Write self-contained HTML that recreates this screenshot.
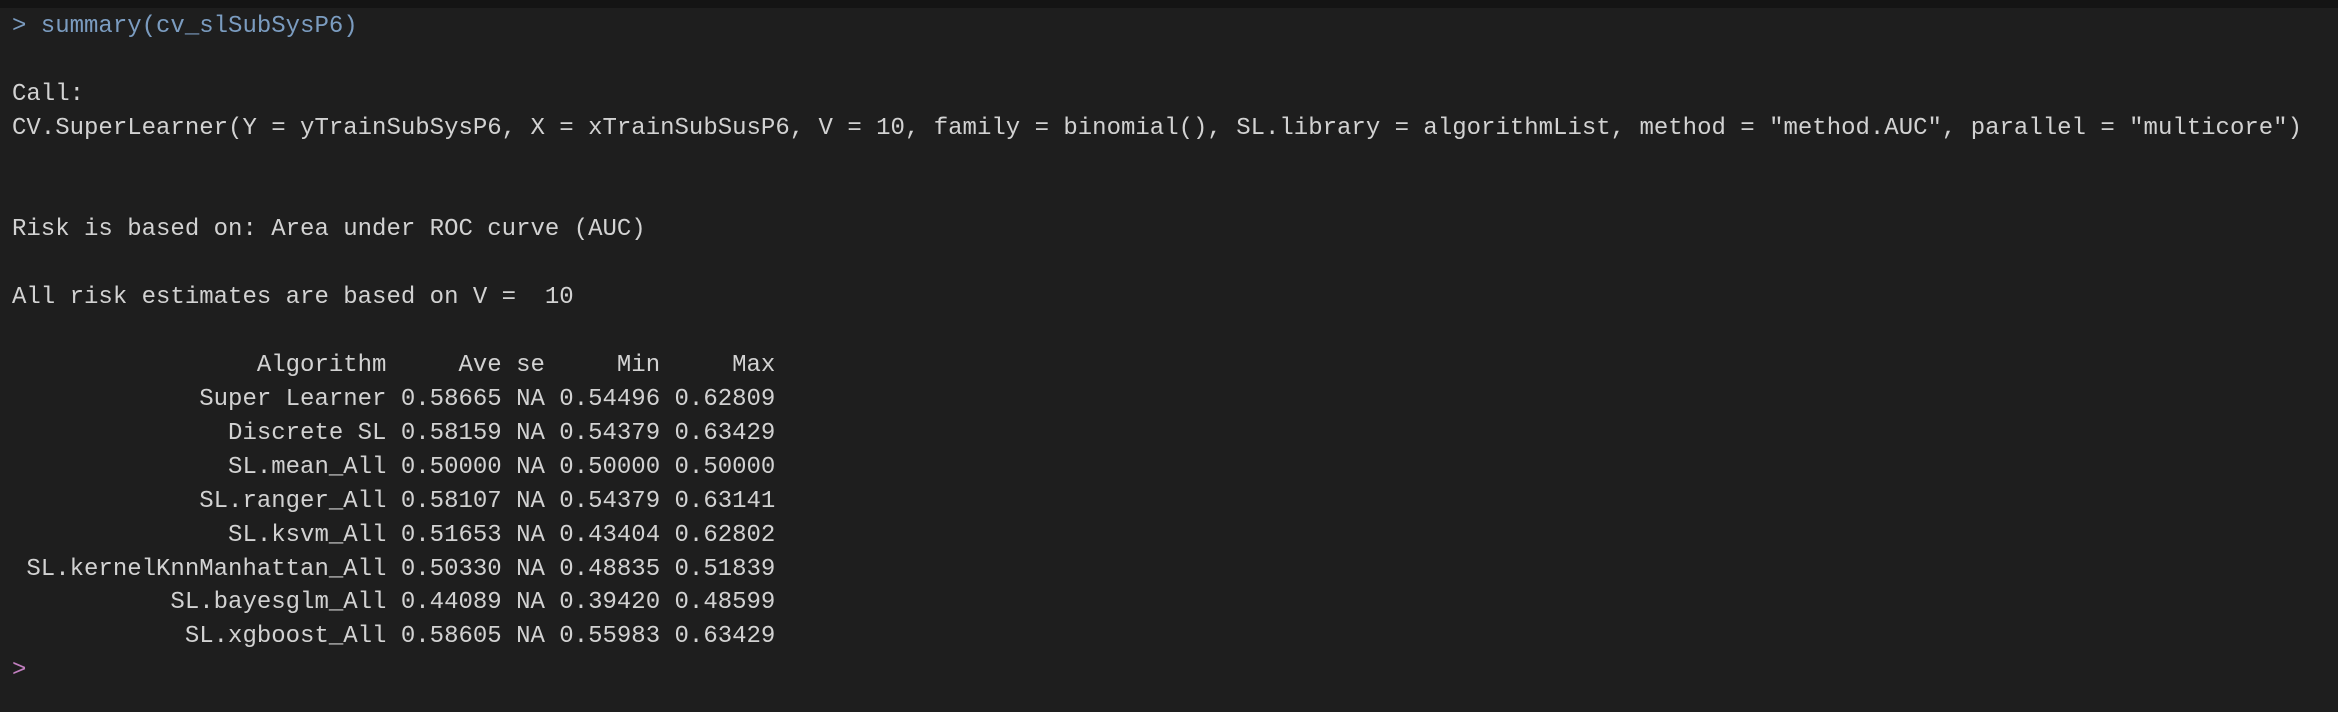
<!DOCTYPE html>
<html><head><meta charset="utf-8"><style>
html,body{margin:0;padding:0;background:#1e1e1e;width:2338px;height:712px;overflow:hidden}
.bar{position:absolute;left:0;top:0;width:2338px;height:8px;background:#141414}
pre{position:absolute;left:12px;top:10px;margin:0;font-family:"Liberation Mono","DejaVu Sans Mono",monospace;font-size:24px;line-height:33.9px;color:#d2d2d2;white-space:pre}
.c{color:#7b9cc0}.p{color:#c27fc0}
</style></head><body><div class="bar"></div><pre><span class="c">&gt; summary(cv_slSubSysP6)</span>

Call:
CV.SuperLearner(Y = yTrainSubSysP6, X = xTrainSubSusP6, V = 10, family = binomial(), SL.library = algorithmList, method = "method.AUC", parallel = "multicore")


Risk is based on: Area under ROC curve (AUC)

All risk estimates are based on V =  10

                 Algorithm     Ave se     Min     Max
             Super Learner 0.58665 NA 0.54496 0.62809
               Discrete SL 0.58159 NA 0.54379 0.63429
               SL.mean_All 0.50000 NA 0.50000 0.50000
             SL.ranger_All 0.58107 NA 0.54379 0.63141
               SL.ksvm_All 0.51653 NA 0.43404 0.62802
 SL.kernelKnnManhattan_All 0.50330 NA 0.48835 0.51839
           SL.bayesglm_All 0.44089 NA 0.39420 0.48599
            SL.xgboost_All 0.58605 NA 0.55983 0.63429
<span class="p">&gt;</span></pre></body></html>
